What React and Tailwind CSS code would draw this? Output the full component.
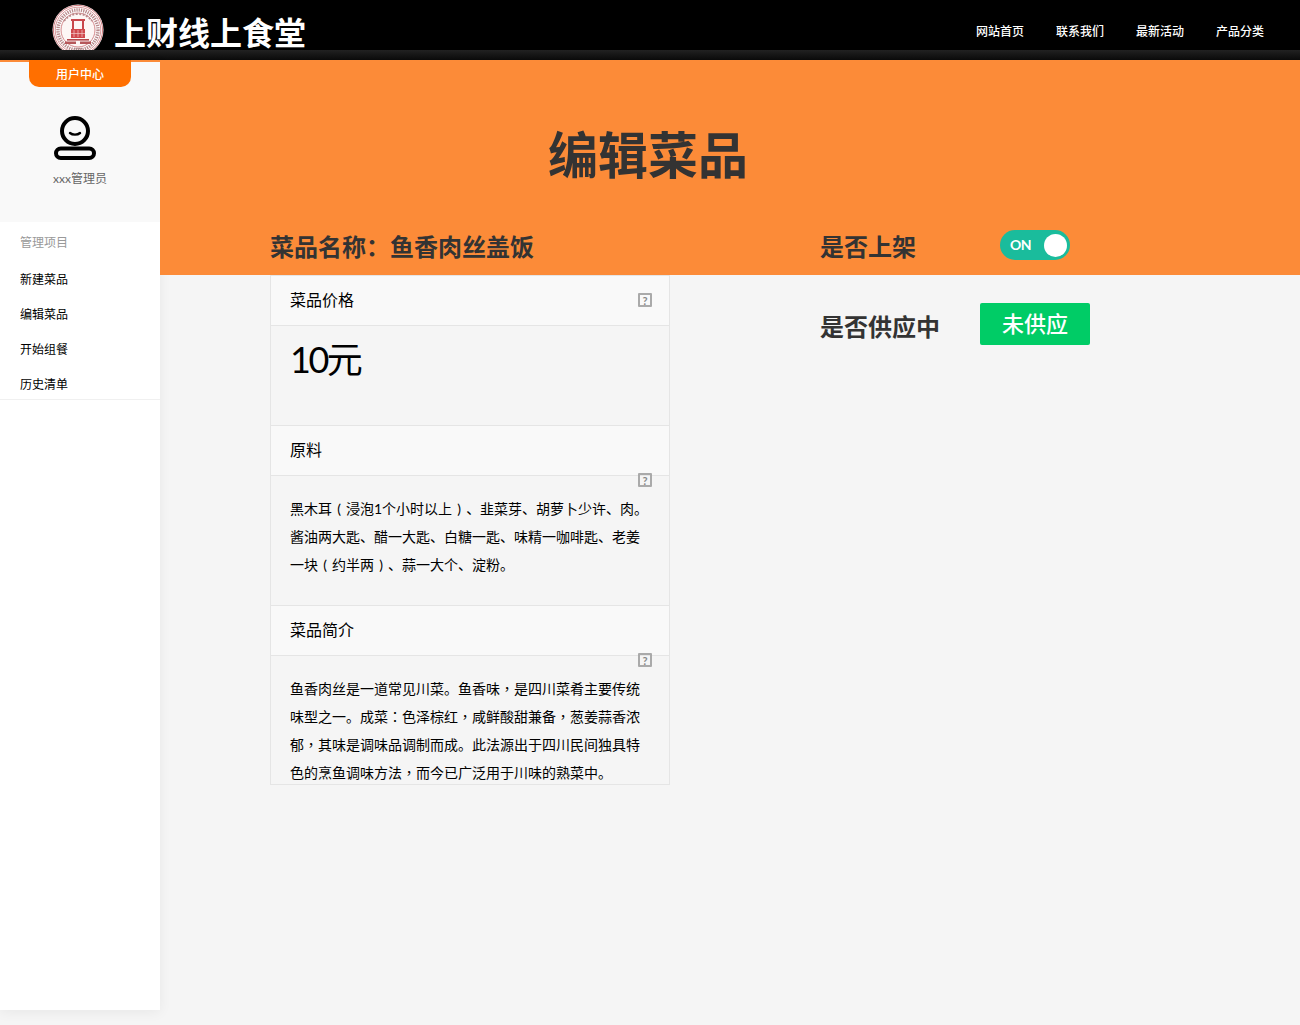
import React from 'react';

const FONT = 'Lato, "Noto Sans CJK SC", "Noto Sans", sans-serif';

const NAV_ITEMS = ['网站首页', '联系我们', '最新活动', '产品分类'];
const MENU_ITEMS = ['新建菜品', '编辑菜品', '开始组餐', '历史清单'];

const SealLogo = () => (
    <svg width="52" height="52" viewBox="0 0 52 52" className="shrink-0">
        <circle cx="26" cy="26" r="25.5" fill="#fff" />
        <circle cx="26" cy="26" r="24.6" fill="none" stroke="#c0565a" strokeWidth="0.8" />
        <circle cx="26" cy="26" r="22.8" fill="none" stroke="#c0565a" strokeWidth="0.6" />
        <circle cx="26" cy="26" r="20" fill="none" stroke="#b98a8c" strokeWidth="3.4" strokeDasharray="1.3 1" />
        <circle cx="26" cy="26" r="17" fill="#fdf6f5" stroke="#c0565a" strokeWidth="0.7" />
        <path d="M12 17c4-5 8-7 14-7s10 2 14 7" fill="none" stroke="#b98a8c" strokeWidth="2" strokeDasharray="2 1.5" />
        <path d="M19 15h14v2H19z M20 17h2v10h-2z M30 17h2v10h-2z" fill="#c9474c" />
        <path d="M19 25h14v9H19z" fill="#d0494d" />
        <path d="M22 26v7M26 26v7M30 26v7M19 29.5h14" stroke="#f4c9c9" strokeWidth="0.7" />
        <path d="M15 35h22v1.6H15z" fill="#b5484c" />
        <path d="M13 37.5h11v2.6H13zM28 37.5h11v2.6H28z" fill="#b5575a" />
        <path d="M22 44.5h8" stroke="#a88" strokeWidth="1.6" strokeDasharray="1.6 .6" />
    </svg>
);

const AvatarIcon = () => (
    <svg width="44" height="44" viewBox="0 0 44 44" fill="none" stroke="#000" strokeWidth="4">
        <circle cx="22" cy="15" r="13" />
        <path d="M17 17c2.6 2.2 7.4 2.2 10 0" strokeWidth="2.4" strokeLinecap="round" />
        <rect x="3" y="32.5" width="38" height="9.5" rx="4.75" />
    </svg>
);

const HelpIcon = ({ className }) => (
    <span className={`absolute right-[17px] flex h-[14px] w-[14px] items-center justify-center rounded-[1px] border-2 border-[#aaa] text-[11px] font-bold leading-none text-[#888] ${className}`}>
        ?
    </span>
);

const SectionHead = ({ title }) => (
    <div className="flex h-[50px] items-center border-b border-[#e5e5e5] bg-[#f9f9f9] pb-[1px] pl-[19px] text-base text-black">
        {title}
    </div>
);

// full-width brackets sit in the middle of their cell in the reference
const Paren = ({ children }) => <span className="inline-block w-[14px] text-center">{children}</span>;

// comma and colon are centred too, the TC cut of the font draws them that way
const Mid = ({ children }) => <span style={{ fontFamily: 'Lato, "Noto Sans CJK TC"' }}>{children}</span>;

const App = () => {
    return (
        <div className="flex min-h-[1025px] flex-col bg-[#f5f5f5] text-black [text-spacing-trim:space-all]" style={{ fontFamily: FONT }}>
            <header className="flex h-[60px] flex-col bg-black">
                <div className="flex h-[50px] items-center justify-between pl-[52px] pr-[28px]">
                    <div className="flex items-center gap-[10px] pt-[9px]">
                        <SealLogo />
                        <span className="mt-[6px] text-[32px] font-bold leading-none text-white">上财线上食堂</span>
                    </div>
                    <nav className="flex gap-[16px] pt-[13px]">
                        {NAV_ITEMS.map((item) => (
                            <a key={item} className="w-[64px] text-center text-xs font-medium text-white">{item}</a>
                        ))}
                    </nav>
                </div>
                <div className="h-[10px] bg-gradient-to-b from-[#222] to-[#0a0a0a]" />
            </header>

            <div className="flex flex-1 items-start">
                <aside className="relative h-[950px] w-[160px] shrink-0 bg-white shadow-[0_2px_12px_rgba(0,0,0,0.06)]">
                    <div className="h-[162px] border-t-2 border-[#fc8b38] bg-[#f9f9f9] pt-[54px] text-center">
                        <div className="flex justify-center pr-[10px]"><AvatarIcon /></div>
                        <p className="mt-[11px] text-xs text-[#666]">xxx管理员</p>
                    </div>
                    <div className="absolute left-[29px] top-0 flex h-[27px] w-[102px] items-center justify-center rounded-b-[10px] bg-[#ff6f00] pt-[2px] text-xs font-medium text-white">
                        用户中心
                    </div>
                    <div className="h-[178px] border-b border-[#f0f0f0] pl-[20px] pt-[11px] text-xs">
                        <p className="flex h-[20px] items-center text-[#999]">管理项目</p>
                        <ul className="mt-[9px]">
                            {MENU_ITEMS.map((item) => (
                                <li key={item} className="flex h-[35px] items-center text-black">{item}</li>
                            ))}
                        </ul>
                    </div>
                </aside>

                <main className="relative flex-1">
                    <section className="h-[215px] bg-[#fc8b38] text-[#333]">
                        <h1 className="w-[976px] pt-[63px] text-center text-[50px] font-bold leading-[64px]">编辑菜品</h1>
                        <div className="mt-[42px] flex pl-[110px]">
                            <h2 className="w-[550px] text-2xl font-bold leading-[36px]">菜品名称：鱼香肉丝盖饭</h2>
                            <h2 className="w-[180px] text-2xl font-bold leading-[36px]">是否上架</h2>
                            <div className="mt-[1px] flex h-[30px] w-[70px] items-center justify-between rounded-full bg-[#1abc9c] pl-[10px] pr-[3px] text-sm font-bold tracking-[-0.5px] text-white">
                                <span>ON</span>
                                <span className="h-[23px] w-[23px] rounded-full bg-white" />
                            </div>
                        </div>
                    </section>

                    <section className="flex items-start pl-[110px]">
                        <div className="relative h-[510px] w-[400px] border border-[#e5e5e5]">
                            <SectionHead title="菜品价格" />
                            <div className="h-[100px] border-b border-[#e5e5e5] pl-[19px] pt-[6px] text-[36px] leading-[54px]">
                                <span className="tracking-[-2.5px]">10</span>元
                            </div>
                            <SectionHead title="原料" />
                            <div className="h-[130px] border-b border-[#e5e5e5] px-[19px] pt-[19px] text-sm leading-[28px]">
                                黑木耳<Paren>(</Paren>浸泡1个小时以上<Paren>)</Paren>、韭菜芽、胡萝卜少许、肉。酱油两大匙、醋一大匙、白糖一匙、味精一咖啡匙、老姜一块<Paren>(</Paren>约半两<Paren>)</Paren>、蒜一大个、淀粉。
                            </div>
                            <SectionHead title="菜品简介" />
                            <div className="h-[128px] px-[19px] pt-[19px] text-sm leading-[28px]">
                                鱼香肉丝是一道常见川菜。鱼香味<Mid>，</Mid>是四川菜肴主要传统味型之一。成菜<Mid>：</Mid>色泽棕红<Mid>，</Mid>咸鲜酸甜兼备<Mid>，</Mid>葱姜蒜香浓郁<Mid>，</Mid>其味是调味品调制而成。此法源出于四川民间独具特色的烹鱼调味方法<Mid>，</Mid>而今已广泛用于川味的熟菜中。
                            </div>
                            <HelpIcon className="top-[17px]" />
                            <HelpIcon className="top-[197px]" />
                            <HelpIcon className="top-[377px]" />
                        </div>
                        <div className="ml-[150px] mt-[28px] flex items-center">
                            <h2 className="w-[160px] pt-[6px] text-2xl font-bold leading-[36px] text-[#333]">是否供应中</h2>
                            <button className="h-[42px] w-[110px] rounded-[2px] bg-[#00cc66] pb-[1px] text-[22px] font-medium text-white">未供应</button>
                        </div>
                    </section>
                </main>
            </div>
        </div>
    );
};

export default App;
